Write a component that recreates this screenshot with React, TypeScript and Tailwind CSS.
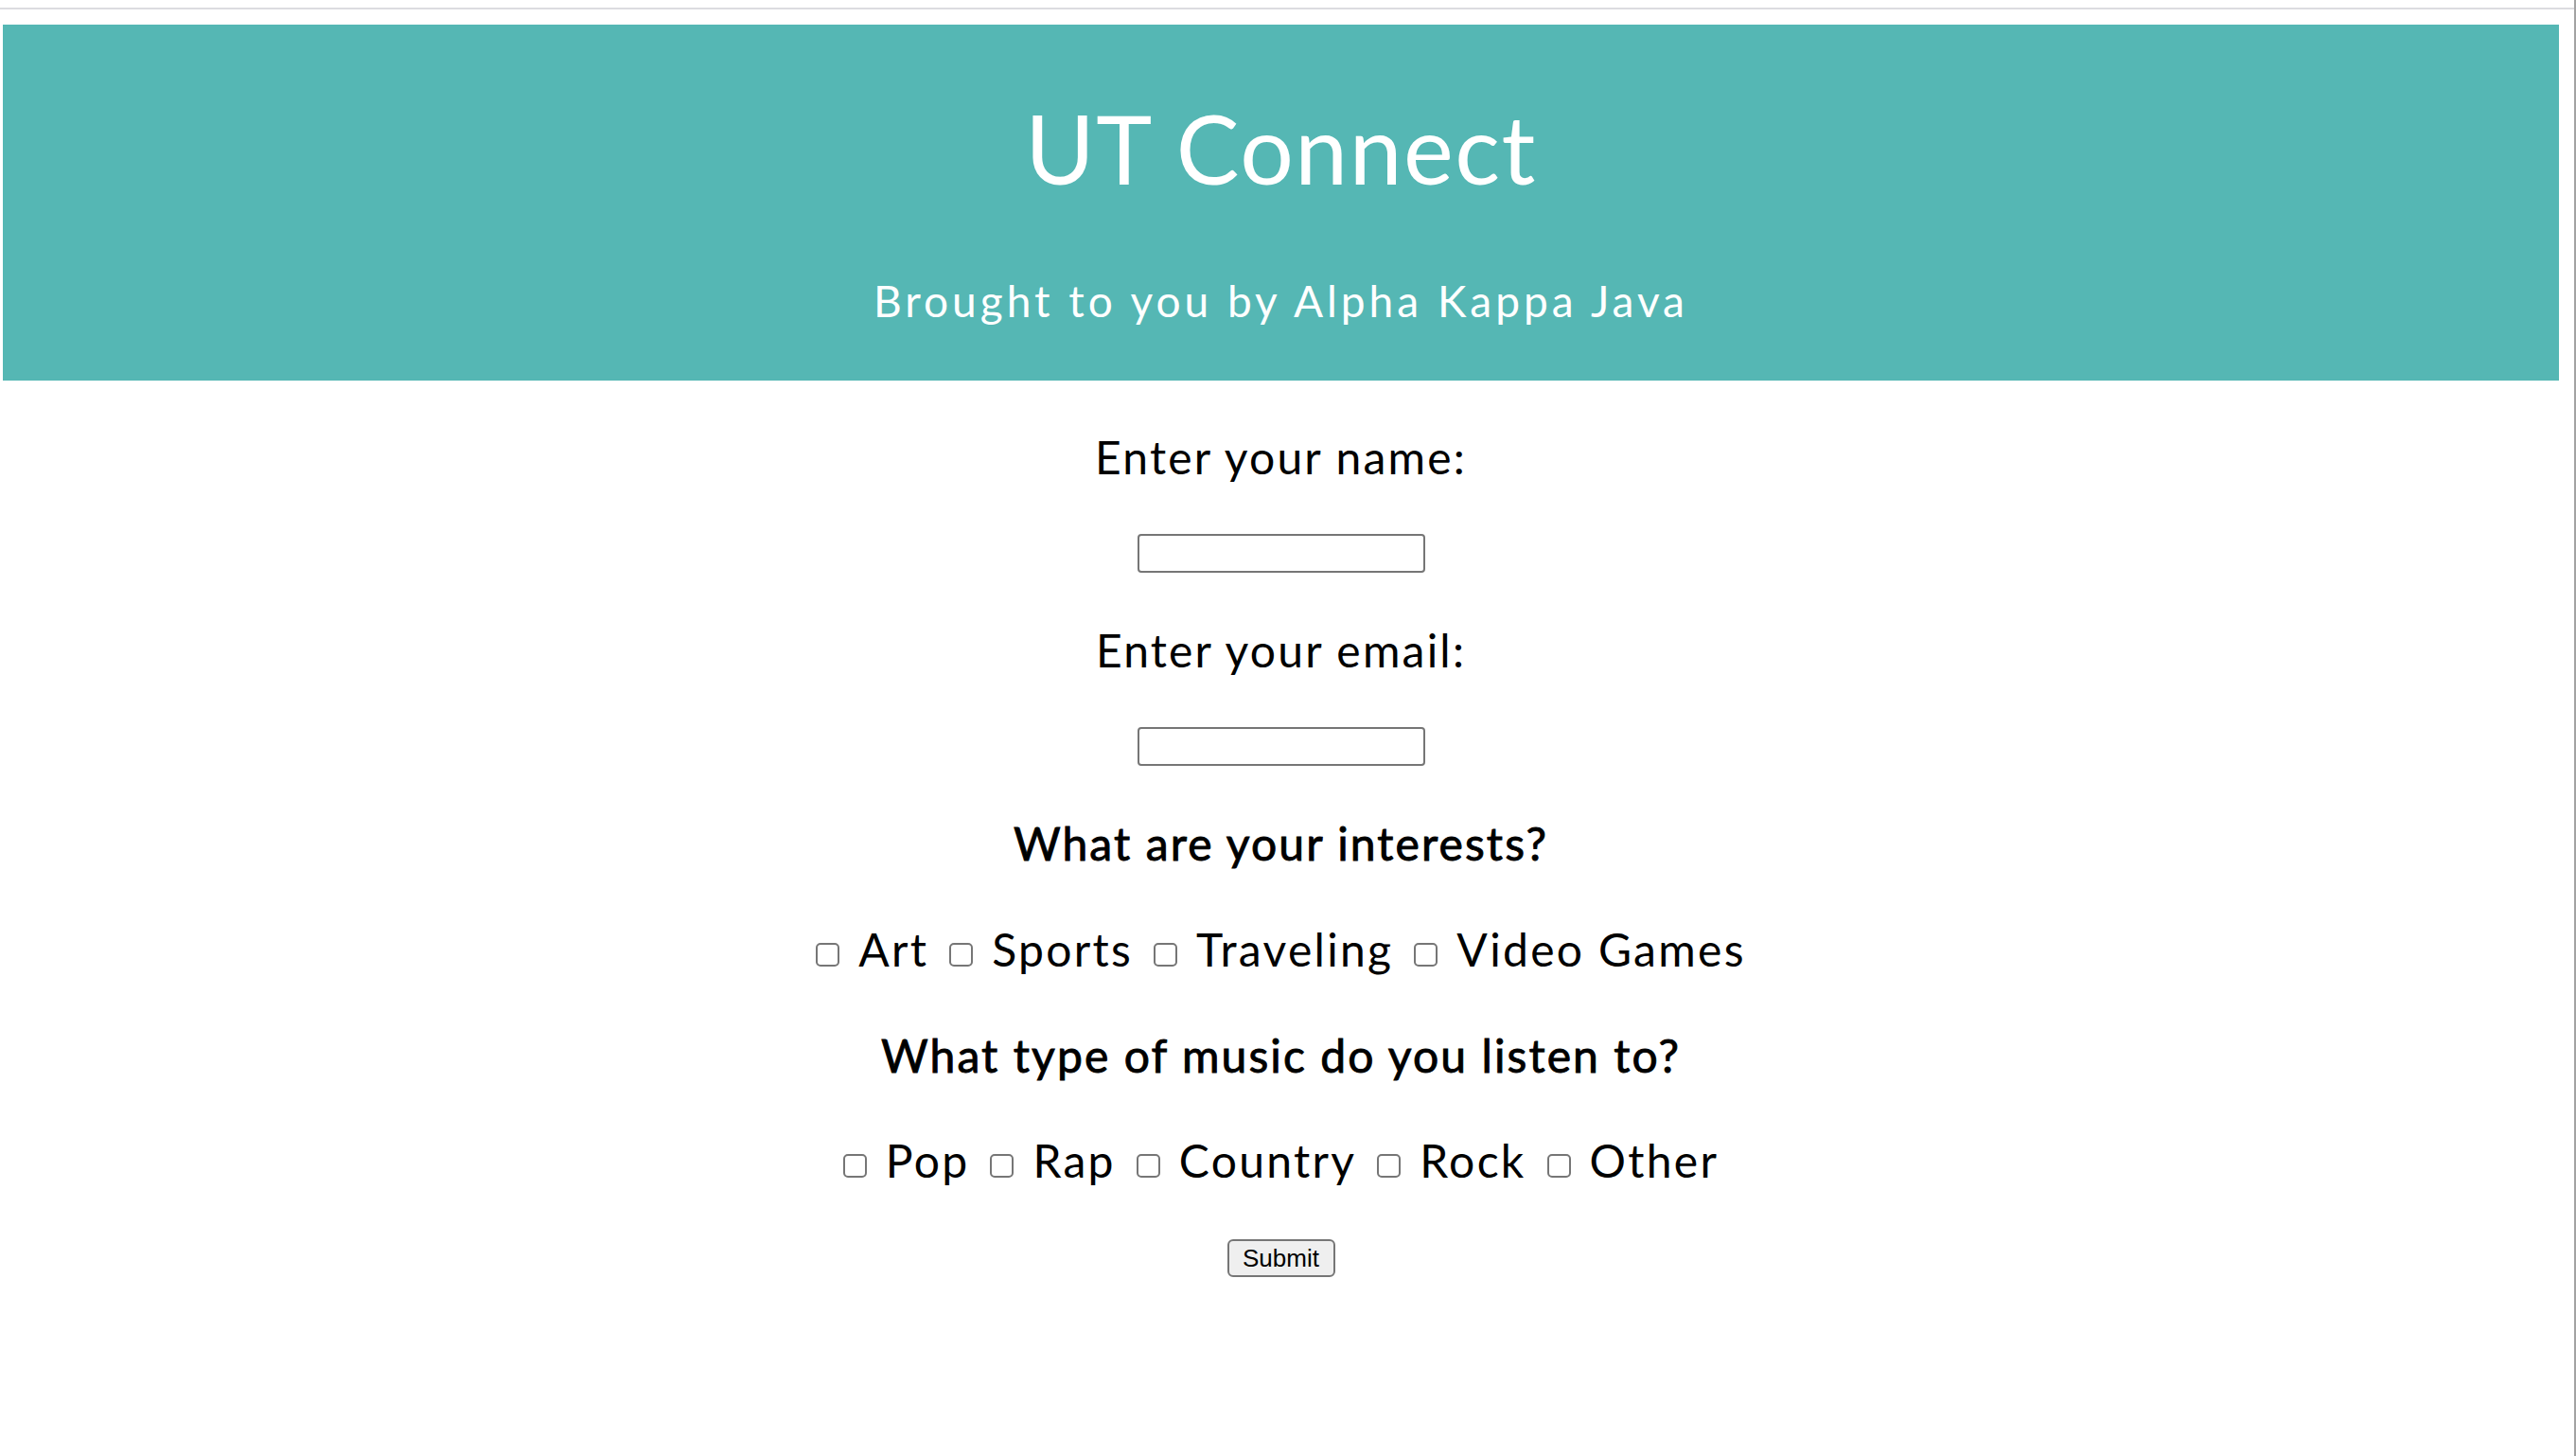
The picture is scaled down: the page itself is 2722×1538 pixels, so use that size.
import { useState } from "react";

const interests = ["Art", "Sports", "Traveling", "Video Games"];
const music = ["Pop", "Rap", "Country", "Rock", "Other"];

function CheckRow({ items, className }: { items: string[]; className: string }) {
  const [checked, setChecked] = useState<string[]>([]);

  const toggle = (item: string) => {
    setChecked((prev) =>
      prev.includes(item) ? prev.filter((x) => x !== item) : [...prev, item]
    );
  };

  return (
    <div className={`flex items-center h-[48px] gap-[22px] ${className}`}>
      {items.map((item) => (
        <label key={item} className="flex items-center gap-[20px] cursor-pointer">
          <input
            type="checkbox"
            checked={checked.includes(item)}
            onChange={() => toggle(item)}
            className="appearance-none mt-[10px] w-[25px] h-[25px] border-2 border-[#767676] rounded-[5px] bg-white checked:bg-[#0075ff] checked:border-[#0075ff]"
          />
          <span className="text-[48px] leading-[48px] tracking-[2.3px]">{item}</span>
        </label>
      ))}
    </div>
  );
}

export default function App() {
  const [name, setName] = useState("");
  const [email, setEmail] = useState("");

  return (
    <div className="flex min-h-screen bg-white text-black font-['Lato',sans-serif]">
      <div className="flex-1">
        <div className="h-[8px]" />
        <div className="h-[2px] bg-[#dcdce0]" />
        <div className="pl-[3px] pr-[16px] pt-[16px]">
          {/* 헤더 */}
          <header className="bg-[#55b7b4] text-white flex flex-col items-center pt-[80px] pb-[61px]">
            <h1 className="text-[100px] leading-[100px] tracking-[1.5px]">UT Connect</h1>
            <p className="text-[46px] leading-[46px] tracking-[4px] mt-[89px]">
              Brought to you by Alpha Kappa Java
            </p>
          </header>

          <form
            className="flex flex-col items-center"
            onSubmit={(e) => e.preventDefault()}
          >
            <label className="text-[48px] leading-[48px] tracking-[2.2px] mt-[57px]">
              Enter your name:
            </label>
            <input
              type="text"
              value={name}
              onChange={(e) => setName(e.target.value)}
              className="mt-[57px] w-[304px] h-[41px] border-2 border-[#767676] rounded-[4px] bg-white px-2 text-[26px]"
            />
            <label className="text-[48px] leading-[48px] tracking-[2.2px] mt-[58px]">
              Enter your email:
            </label>
            <input
              type="email"
              value={email}
              onChange={(e) => setEmail(e.target.value)}
              className="mt-[57px] w-[304px] h-[41px] border-2 border-[#767676] rounded-[4px] bg-white px-2 text-[26px]"
            />

            <h2 className="text-[48px] leading-[48px] font-normal tracking-[2.1px] [-webkit-text-stroke:0.9px_black] mt-[58px]">
              What are your interests?
            </h2>
            <CheckRow items={interests} className="mt-[64px]" />

            <h2 className="text-[48px] leading-[48px] font-normal tracking-[2.1px] [-webkit-text-stroke:0.9px_black] mt-[64px]">
              What type of music do you listen to?
            </h2>
            <CheckRow items={music} className="mt-[63px]" />

            <button
              type="submit"
              className="mt-[59px] w-[114px] h-[40px] border-2 border-[#767676] rounded-[6px] bg-[#efefef] text-[26px] leading-none font-['Liberation_Sans',Arial,sans-serif]"
            >
              Submit
            </button>
          </form>
        </div>
      </div>
      <div className="w-[2px] bg-[#a3a3a3]" />
    </div>
  );
}
